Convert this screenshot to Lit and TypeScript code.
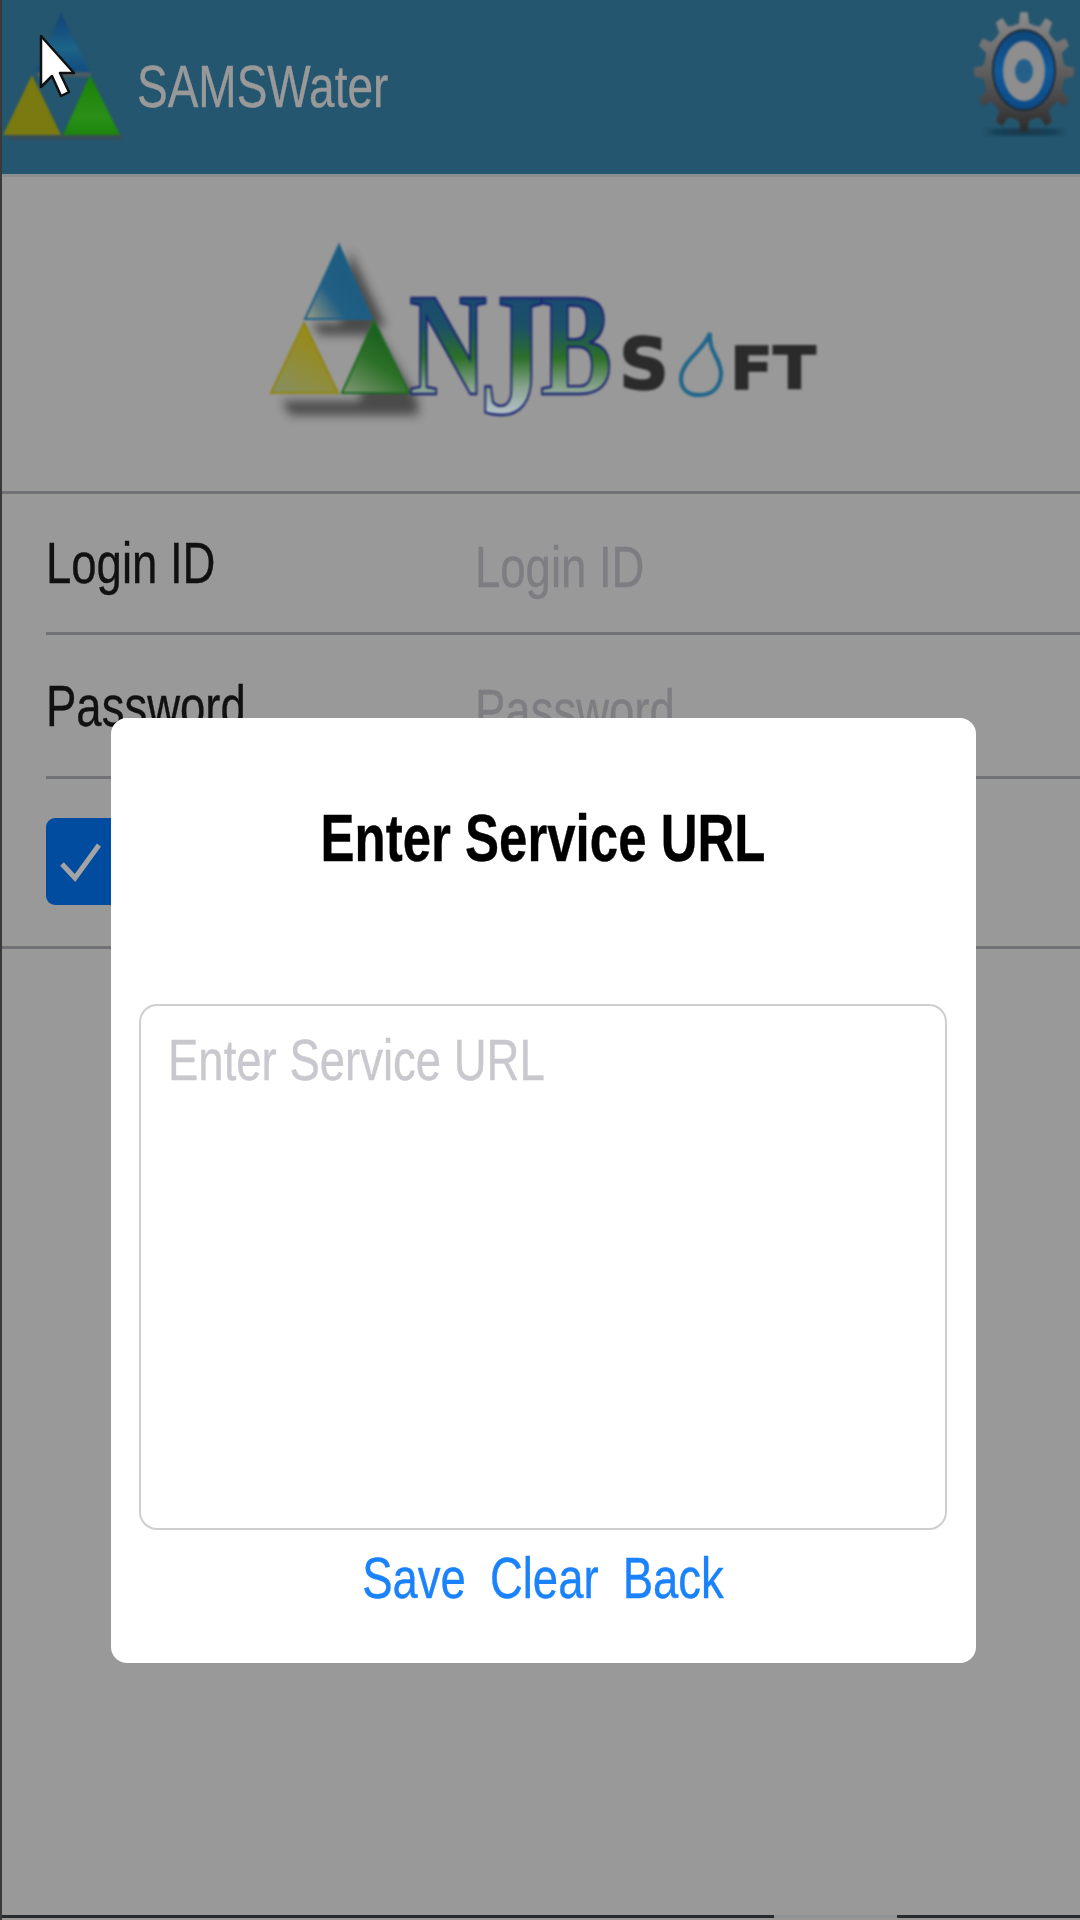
import { LitElement, html, css } from 'lit';
import { customElement } from 'lit/decorators.js';

// 12 tooth gear, unit circle stretched to the squashed look of the original
function gearPoints(cx: number, cy: number, rx: number, ry: number) {
  const teeth = 12;
  const pts: string[] = [];
  for (let i = 0; i < teeth; i++) {
    const a = (i / teeth) * Math.PI * 2 - Math.PI / 2;
    const step = (Math.PI * 2) / teeth;
    const stops: [number, number][] = [
      [-0.5, 0.8],
      [-0.24, 0.82],
      [-0.14, 1],
      [0.14, 1],
      [0.24, 0.82],
    ];
    for (const [off, r] of stops) {
      const t = a + off * step;
      pts.push(`${(cx + Math.cos(t) * rx * r).toFixed(1)},${(cy + Math.sin(t) * ry * r).toFixed(1)}`);
    }
  }
  return pts.join(' ');
}

@customElement('app-root')
export class AppRoot extends LitElement {
  static styles = css`
    :host {
      display: flex;
      flex-direction: column;
      position: relative;
      box-sizing: border-box;
      width: 1080px;
      height: 1920px;
      overflow: hidden;
      background: #999;
      border-left: 2px solid #3a3a3a;
      font-family: 'Liberation Sans', Arial, sans-serif;
    }
    .tall {
      display: inline-block;
      font-size: 45.5px;
      line-height: 60px;
      transform: scaleY(1.28);
      filter: blur(0.6px);
      -webkit-text-stroke: 0.3px currentColor;
      white-space: nowrap;
    }
    .header {
      display: flex;
      align-items: center;
      flex: none;
      height: 174px;
      background: #25566f;
      border-bottom: 3px solid #8b8f92;
    }
    .header svg {
      display: block;
      flex: none;
      filter: blur(0.9px);
    }
    .brand {
      margin-left: 12px;
      font-size: 46px;
      color: #999;
    }
    .gear {
      margin-left: auto;
    }
    .logo {
      display: flex;
      justify-content: center;
      align-items: center;
      flex: none;
      height: 314px;
      border-bottom: 3px solid #717275;
    }
    .logo svg {
      display: block;
      margin: -6px 0 0 8px;
      filter: blur(0.9px);
    }
    .row {
      display: flex;
      align-items: center;
      flex: none;
      margin-left: 44px;
      height: 138px;
      border-bottom: 3px solid #717275;
      color: #111;
    }
    .row.second {
      height: 141px;
    }
    .row .label {
      width: 429px;
      padding-top: 2px;
    }
    .row .hint {
      color: #7d7d82;
      padding-top: 8px;
    }
    .check-row {
      display: flex;
      align-items: center;
      flex: none;
      height: 167px;
      padding-left: 44px;
      border-bottom: 3px solid #717275;
    }
    .check {
      display: flex;
      align-items: center;
      justify-content: center;
      width: 87px;
      height: 87px;
      margin-top: -3px;
      border-radius: 9px;
      background: #014c9f;
    }
    .check svg {
      display: block;
      margin-left: -20px;
      filter: blur(0.5px);
    }
    .spacer {
      flex: 1;
    }
    .taskbar {
      display: flex;
      flex: none;
      height: 3px;
      margin-bottom: 2px;
    }
    .taskbar .seg {
      flex: 1;
      background: #262a2e;
    }
    .taskbar .gap {
      flex: none;
      width: 123px;
      background: #8f9295;
    }
    .taskbar .end {
      flex: none;
      width: 183px;
      background: #262a2e;
    }
    .dialog {
      position: absolute;
      left: 109px;
      top: 718px;
      box-sizing: border-box;
      width: 865px;
      height: 945px;
      padding: 91px 29px 0 28px;
      background: #fff;
      border-radius: 16px;
      filter: blur(0.3px);
    }
    .title {
      display: flex;
      justify-content: center;
    }
    .title .tall {
      font-size: 51px;
      font-weight: 700;
      color: #000;
      transform: scaleY(1.31);
    }
    .area {
      box-sizing: border-box;
      height: 526px;
      margin-top: 135px;
      padding: 25px 27px;
      border: 2px solid #cfcfd2;
      border-radius: 18px;
    }
    .area .tall {
      color: #c8c8ce;
    }
    .actions {
      display: flex;
      justify-content: center;
      gap: 24px;
      margin-top: 19px;
      color: #1a82fb;
    }
    .cursor {
      position: absolute;
      left: 36px;
      top: 32px;
      filter: blur(0.6px);
    }
  `;

  private renderHeaderLogo() {
    return html`<svg width="123" height="174" viewBox="2 0 123 174">
      <defs>
        <linearGradient id="hb" x1="0" y1="0" x2="0" y2="1">
          <stop offset="0" stop-color="#123f78" />
          <stop offset="0.6" stop-color="#1c6488" />
          <stop offset="1" stop-color="#124c80" />
        </linearGradient>
        <linearGradient id="hg" x1="0" y1="0" x2="0" y2="1">
          <stop offset="0" stop-color="#1a8008" />
          <stop offset="0.7" stop-color="#2a9018" />
          <stop offset="1" stop-color="#1c840c" />
        </linearGradient>
      </defs>
      <rect x="8" y="133" width="114" height="7" fill="#3c4c52" opacity="0.8" />
      <path d="M37 72h54v5H37z" fill="#4b5c62" />
      <path d="M61 13 90 72H36Z" fill="url(#hb)" />
      <path d="M32 75 61 135H3Z" fill="#7b7a10" />
      <path d="M90 75 120 135H63Z" fill="url(#hg)" />
    </svg>`;
  }

  private renderGear() {
    return html`<svg class="gear" width="108" height="174" viewBox="970 0 108 174">
      <defs>
        <linearGradient id="gm" x1="0" y1="0" x2="0" y2="1">
          <stop offset="0" stop-color="#8c8c8c" />
          <stop offset="0.5" stop-color="#5e5e5e" />
          <stop offset="1" stop-color="#2c2c2c" />
        </linearGradient>
        <linearGradient id="gr" x1="0" y1="0" x2="0" y2="1">
          <stop offset="0" stop-color="#0d4478" />
          <stop offset="0.5" stop-color="#105a9c" />
          <stop offset="1" stop-color="#0c4a86" />
        </linearGradient>
        <filter id="gs"><feGaussianBlur stdDeviation="3" /></filter>
      </defs>
      <ellipse cx="1023" cy="132" rx="38" ry="3" fill="#0c2a3a" filter="url(#gs)" />
      <polygon points=${gearPoints(1022, 72, 50, 60)} fill="url(#gm)" />
      <ellipse cx="1022" cy="70" rx="31" ry="40" fill="url(#gr)" stroke="#1c2c3c" stroke-width="2" />
      <ellipse cx="1022" cy="71" rx="21" ry="30" fill="#8e8e8e" />
      <ellipse cx="1022" cy="71" rx="9" ry="12" fill="#25608a" />
    </svg>`;
  }

  private renderLogo() {
    const serif = "'Liberation Serif', serif";
    const wide = "'DejaVu Sans', sans-serif";
    return html`<svg width="570" height="200" viewBox="260 230 570 200">
      <defs>
        <linearGradient id="tb" x1="0" y1="1" x2="0.8" y2="0.4">
          <stop offset="0" stop-color="#a09e84" />
          <stop offset="0.5" stop-color="#215f84" />
          <stop offset="1" stop-color="#1c5c80" />
        </linearGradient>
        <linearGradient id="ty" x1="0.1" y1="1" x2="0.6" y2="0.2">
          <stop offset="0" stop-color="#878f60" />
          <stop offset="1" stop-color="#978b1a" />
        </linearGradient>
        <linearGradient id="tg" x1="0.1" y1="1" x2="0.6" y2="0.2">
          <stop offset="0" stop-color="#7a9470" />
          <stop offset="0.6" stop-color="#2c7028" />
          <stop offset="1" stop-color="#1c6020" />
        </linearGradient>
        <linearGradient id="nj" gradientUnits="userSpaceOnUse" x1="0" y1="-96" x2="0" y2="19">
          <stop offset="0" stop-color="#1a4c70" />
          <stop offset="0.25" stop-color="#1c5068" />
          <stop offset="0.52" stop-color="#2c7028" />
          <stop offset="0.78" stop-color="#8aa48f" />
          <stop offset="1" stop-color="#b4c0c8" />
        </linearGradient>
        <filter id="ts" x="-20%" y="-20%" width="140%" height="140%"><feGaussianBlur stdDeviation="5" /></filter>
      </defs>
      <g filter="url(#ts)" fill="#2a2a2a" opacity="0.7">
        <path d="M350 250 386 325H340Z" />
        <path d="M282 400H418V414H290Z" />
        <path d="M372 322 418 400H360Z" />
        <path d="M312 322H372V334H320Z" />
      </g>
      <path d="M339 244 372 318H305Z" fill="url(#tb)" stroke="#1d5f86" stroke-width="2" />
      <path d="M304 322 338 392H271Z" fill="url(#ty)" stroke="#8f8414" stroke-width="2" />
      <path d="M374 320 409 392H342Z" fill="url(#tg)" stroke="#1c6a22" stroke-width="2" />
      <text transform="translate(409 393) scale(0.74 1)" font-family=${serif} font-weight="700" font-size="146"
        fill="url(#nj)" stroke="#1a2670" stroke-width="2.4">N<tspan font-size="176" dx="-10" dy="19">J</tspan><tspan dx="-6" dy="-19">B</tspan></text>
      <g font-family=${wide} font-weight="700" fill="#2b2b2b" stroke="#2b2b2b" stroke-width="1.5">
        <text x="619" y="388" font-size="72" textLength="50" lengthAdjust="spacingAndGlyphs">S</text>
        <text x="730" y="388" font-size="59" textLength="86" lengthAdjust="spacingAndGlyphs">FT</text>
      </g>
      <path d="M710 332C704 350 681 360 681 378C681 390 690 394 700 394C714 394 721 384 721 372C721 358 708 350 710 332Z"
        fill="none" stroke="#1f6488" stroke-width="4" />
    </svg>`;
  }

  render() {
    return html`
      <div class="header">
        ${this.renderHeaderLogo()}
        <span class="tall brand">SAMSWater</span>
        ${this.renderGear()}
      </div>
      <div class="logo">${this.renderLogo()}</div>
      <div class="row">
        <span class="tall label">Login ID</span>
        <span class="tall hint">Login ID</span>
      </div>
      <div class="row second">
        <span class="tall label">Password</span>
        <span class="tall hint">Password</span>
      </div>
      <div class="check-row">
        <div class="check">
          <svg width="44" height="44" viewBox="0 0 44 44">
            <path d="M4 25 17 39 41 6" fill="none" stroke="#a4a4a4" stroke-width="5" />
          </svg>
        </div>
      </div>
      <div class="spacer"></div>
      <div class="taskbar">
        <div class="seg"></div>
        <div class="gap"></div>
        <div class="end"></div>
      </div>

      <div class="dialog">
        <div class="title"><span class="tall">Enter Service URL</span></div>
        <div class="area"><span class="tall">Enter Service URL</span></div>
        <div class="actions">
          <span class="tall">Save</span>
          <span class="tall">Clear</span>
          <span class="tall">Back</span>
        </div>
      </div>

      <svg class="cursor" width="40" height="70" viewBox="0 0 40 70">
        <path d="M3 4V55L14 44 23 64 31 60 22 41H36Z" fill="#fff" stroke="#111" stroke-width="2.5" stroke-linejoin="round" />
      </svg>
    `;
  }
}
